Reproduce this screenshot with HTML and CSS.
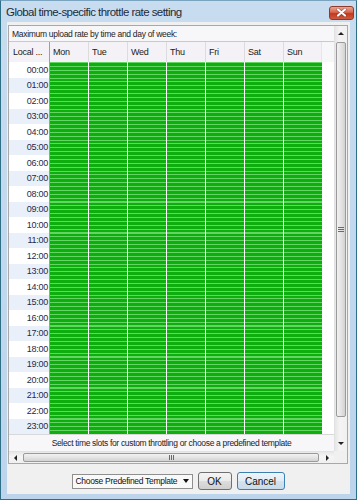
FILE: index.html
```html
<!DOCTYPE html>
<html>
<head>
<meta charset="utf-8">
<link rel="stylesheet" href="styles.css">
</head>
<body>
<div class="window">
  <div class="titlebar">
    <span class="title">Global time-specific throttle rate setting</span>
    <div class="close">
      <svg width="11" height="9" viewBox="0 0 11 9">
        <path d="M2 1.5 L9 7.5 M9 1.5 L2 7.5" stroke="#5a2a22" stroke-width="3.2" stroke-linecap="round" opacity="0.5"/>
        <path d="M2 1.5 L9 7.5 M9 1.5 L2 7.5" stroke="#ffffff" stroke-width="2.2" stroke-linecap="round"/>
      </svg>
    </div>
  </div>
  <div class="client">
    <div class="panel">
      <div class="scrollarea">
        <div class="toplabel">Maximum upload rate by time and day of week:</div>
        <div class="table">
          <div class="hcell hfirst">Local ...</div>
          <div class="hcell">Mon</div>
          <div class="hcell">Tue</div>
          <div class="hcell">Wed</div>
          <div class="hcell">Thu</div>
          <div class="hcell">Fri</div>
          <div class="hcell">Sat</div>
          <div class="hcell hlast">Sun</div>
          <div class="hfill"></div>
          <div class="times">
            <div class="time">00:00</div>
            <div class="time">01:00</div>
            <div class="time">02:00</div>
            <div class="time">03:00</div>
            <div class="time">04:00</div>
            <div class="time">05:00</div>
            <div class="time">06:00</div>
            <div class="time">07:00</div>
            <div class="time">08:00</div>
            <div class="time">09:00</div>
            <div class="time">10:00</div>
            <div class="time">11:00</div>
            <div class="time">12:00</div>
            <div class="time">13:00</div>
            <div class="time">14:00</div>
            <div class="time">15:00</div>
            <div class="time">16:00</div>
            <div class="time">17:00</div>
            <div class="time">18:00</div>
            <div class="time">19:00</div>
            <div class="time">20:00</div>
            <div class="time">21:00</div>
            <div class="time">22:00</div>
            <div class="time">23:00</div>
          </div>
          <div class="day"></div>
          <div class="day"></div>
          <div class="day"></div>
          <div class="day"></div>
          <div class="day"></div>
          <div class="day"></div>
          <div class="day dlast"></div>
          <div class="gfill"></div>
        </div>
        <div class="bottomlabel">Select time slots for custom throttling or choose a predefined template</div>
      </div>
      <div class="vscroll">
        <div class="varrow"><span class="tri-up"></span></div>
        <div class="vtrack">
          <div class="vthumb"><span class="grip-h"></span></div>
        </div>
        <div class="varrow"><span class="tri-down"></span></div>
      </div>
      <div class="hscroll">
        <div class="harrow"><span class="tri-left"></span></div>
        <div class="htrack">
          <div class="hthumb"><span class="grip-v"></span></div>
        </div>
        <div class="harrow"><span class="tri-right"></span></div>
      </div>
      <div class="corner"></div>
    </div>
    <div class="buttons">
      <div class="dropdown"><span>Choose Predefined Template</span><span class="tri-down dd"></span></div>
      <div class="btn ok">OK</div>
      <div class="btn cancel">Cancel</div>
    </div>
  </div>
</div>
</body>
</html>
```
FILE: styles.css
```css
body {
  margin: 0;
}

.window {
  width: 357px;
  height: 500px;
  box-sizing: border-box;
  border: 1px solid #2e6f88;
  border-top-color: #7aa3bf;
  background: linear-gradient(#c8dcf0, #bcd4ec);
  display: flex;
  flex-direction: column;
  padding: 0 6px 5px;
  font-family: "Liberation Sans", Arial, sans-serif;
}

.titlebar {
  height: 21px;
  display: flex;
  align-items: center;
  justify-content: space-between;
  margin-right: -4px;
  margin-left: -1px;
}

.title {
  font-size: 11.5px;
  letter-spacing: -0.55px;
  color: #1d2b3a;
  padding-top: 1px;
}

.close {
  width: 25px;
  height: 14px;
  box-sizing: border-box;
  border: 1px solid #8e3b2e;
  border-radius: 3px;
  background: linear-gradient(#eaa693, #d6644c 45%, #c2391f 55%, #cf5a3d);
  display: flex;
  align-items: center;
  justify-content: center;
  margin-top: 2px;
}

.client {
  flex: 1;
  background: #f0f0f0;
  padding: 3px 2px 0 1px;
  display: flex;
  flex-direction: column;
}

.panel {
  height: 439px;
  box-sizing: border-box;
  border: 1px solid #a8a8a8;
  display: grid;
  grid-template-columns: 325px 13px;
  grid-template-rows: 425px 12px;
  background: #ffffff;
}

.scrollarea {
  display: flex;
  flex-direction: column;
  background: #f7f6f9;
  overflow: hidden;
}

.toplabel {
  height: 15px;
  border-bottom: 1px solid #c9c9c9;
  font-size: 8.5px;
  letter-spacing: -0.3px;
  color: #222;
  display: flex;
  align-items: center;
  padding-left: 3px;
}

.table {
  display: grid;
  grid-template-columns: 41px repeat(6, 39px) 38px 1fr;
  grid-template-rows: 20px 372px;
}

.hcell {
  background: #f4f2f6;
  border-right: 1px solid #dcdcdc;
  font-size: 9px;
  letter-spacing: -0.25px;
  color: #222;
  display: flex;
  align-items: center;
  padding-left: 3px;
}

.hfirst {
  padding-left: 4px;
  border-right: 1px solid #9f9f9f;
}

.hlast {
  border-right: 1px solid #e6e6e6;
}

.hfill {
  background: #f7f6f9;
}

.times {
  display: grid;
  grid-template-rows: repeat(24, 1fr);
  border-right: 1px solid #9f9f9f;
}

.time {
  font-size: 9px;
  letter-spacing: -0.25px;
  color: #1c2a4c;
  display: flex;
  align-items: center;
  justify-content: flex-end;
  padding-right: 1px;
  background: #ffffff;
}

.time:nth-child(even) {
  background: #e9f0fa;
}

.day {
  border-right: 1px solid #ffffff;
  background: repeating-linear-gradient(to bottom, #64d464 0, #64d464 1px, #0fae0f 1px, #0fae0f 3.875px);
}

.dlast {
  border-right: none;
}

.gfill {
  background: #ffffff;
}

.bottomlabel {
  flex: 1;
  border-top: 1px solid #d8d8d8;
  font-size: 8.5px;
  letter-spacing: -0.33px;
  color: #222;
  display: flex;
  align-items: center;
  justify-content: center;
}

.vscroll {
  display: flex;
  flex-direction: column;
  background: linear-gradient(to right, #e6e6e6, #f4f4f4 40%, #f0f0f0);
  border-left: 1px solid #e2e2e2;
}

.varrow {
  height: 15px;
  display: flex;
  align-items: center;
  justify-content: center;
  flex: none;
}

.vtrack {
  flex: 1;
  padding-top: 1px;
}

.vthumb {
  height: 375px;
  margin: 0 1px 0 1px;
  box-sizing: border-box;
  border: 1px solid #9a9a9a;
  border-radius: 2px;
  background: linear-gradient(to right, #f2f2f2, #e4e4e4 50%, #d2d2d2);
  display: flex;
  align-items: center;
  justify-content: center;
}

.grip-h {
  width: 6px;
  height: 5px;
  background: repeating-linear-gradient(to bottom, #6a6a6a 0, #6a6a6a 1px, transparent 1px, transparent 2px);
}

.hscroll {
  display: flex;
  background: linear-gradient(#e8e8e8, #f5f5f5 40%, #f0f0f0);
  border-top: 1px solid #e2e2e2;
}

.harrow {
  width: 13px;
  display: flex;
  align-items: center;
  justify-content: center;
  flex: none;
}

.htrack {
  flex: 1;
  padding-left: 1px;
  display: flex;
}

.hthumb {
  width: 296px;
  margin: 1px 0;
  box-sizing: border-box;
  border: 1px solid #9a9a9a;
  border-radius: 2px;
  background: linear-gradient(#f2f2f2, #e4e4e4 50%, #d2d2d2);
  display: flex;
  align-items: center;
  justify-content: center;
}

.grip-v {
  width: 5px;
  height: 5px;
  background: repeating-linear-gradient(to right, #6a6a6a 0, #6a6a6a 1px, transparent 1px, transparent 2px);
}

.corner {
  background: #f0f0f0;
}

.tri-up {
  width: 0;
  height: 0;
  border-left: 3px solid transparent;
  border-right: 3px solid transparent;
  border-bottom: 3px solid #222;
}

.tri-down {
  width: 0;
  height: 0;
  border-left: 3px solid transparent;
  border-right: 3px solid transparent;
  border-top: 3px solid #222;
}

.tri-left {
  width: 0;
  height: 0;
  border-top: 3px solid transparent;
  border-bottom: 3px solid transparent;
  border-right: 3px solid #222;
}

.tri-right {
  width: 0;
  height: 0;
  border-top: 3px solid transparent;
  border-bottom: 3px solid transparent;
  border-left: 3px solid #222;
}

.buttons {
  display: flex;
  justify-content: center;
  align-items: center;
  gap: 5px;
  padding-top: 8px;
}

.dropdown {
  width: 121px;
  height: 15px;
  box-sizing: border-box;
  border: 1px solid #8f8f8f;
  background: #f9f9f9;
  font-size: 8.5px;
  letter-spacing: -0.3px;
  color: #111;
  display: flex;
  align-items: center;
  justify-content: space-between;
  padding: 0 3px 0 3px;
}

.dd {
  border-left-width: 3.5px;
  border-right-width: 3.5px;
  border-top-width: 4px;
  border-top-color: #111;
}

.btn {
  height: 18px;
  box-sizing: border-box;
  border: 1px solid #707070;
  border-radius: 3px;
  background: linear-gradient(#f4f4f4, #ebebeb 48%, #dddddd 52%, #cfcfcf);
  font-size: 10px;
  color: #111;
  display: flex;
  align-items: center;
  justify-content: center;
}

.ok {
  width: 34px;
}

.cancel {
  width: 48px;
  border-color: #3c7fb1;
  background: linear-gradient(#eef4fa, #e2ecf5 48%, #d3e2ef 52%, #c9dbea);
}
```
